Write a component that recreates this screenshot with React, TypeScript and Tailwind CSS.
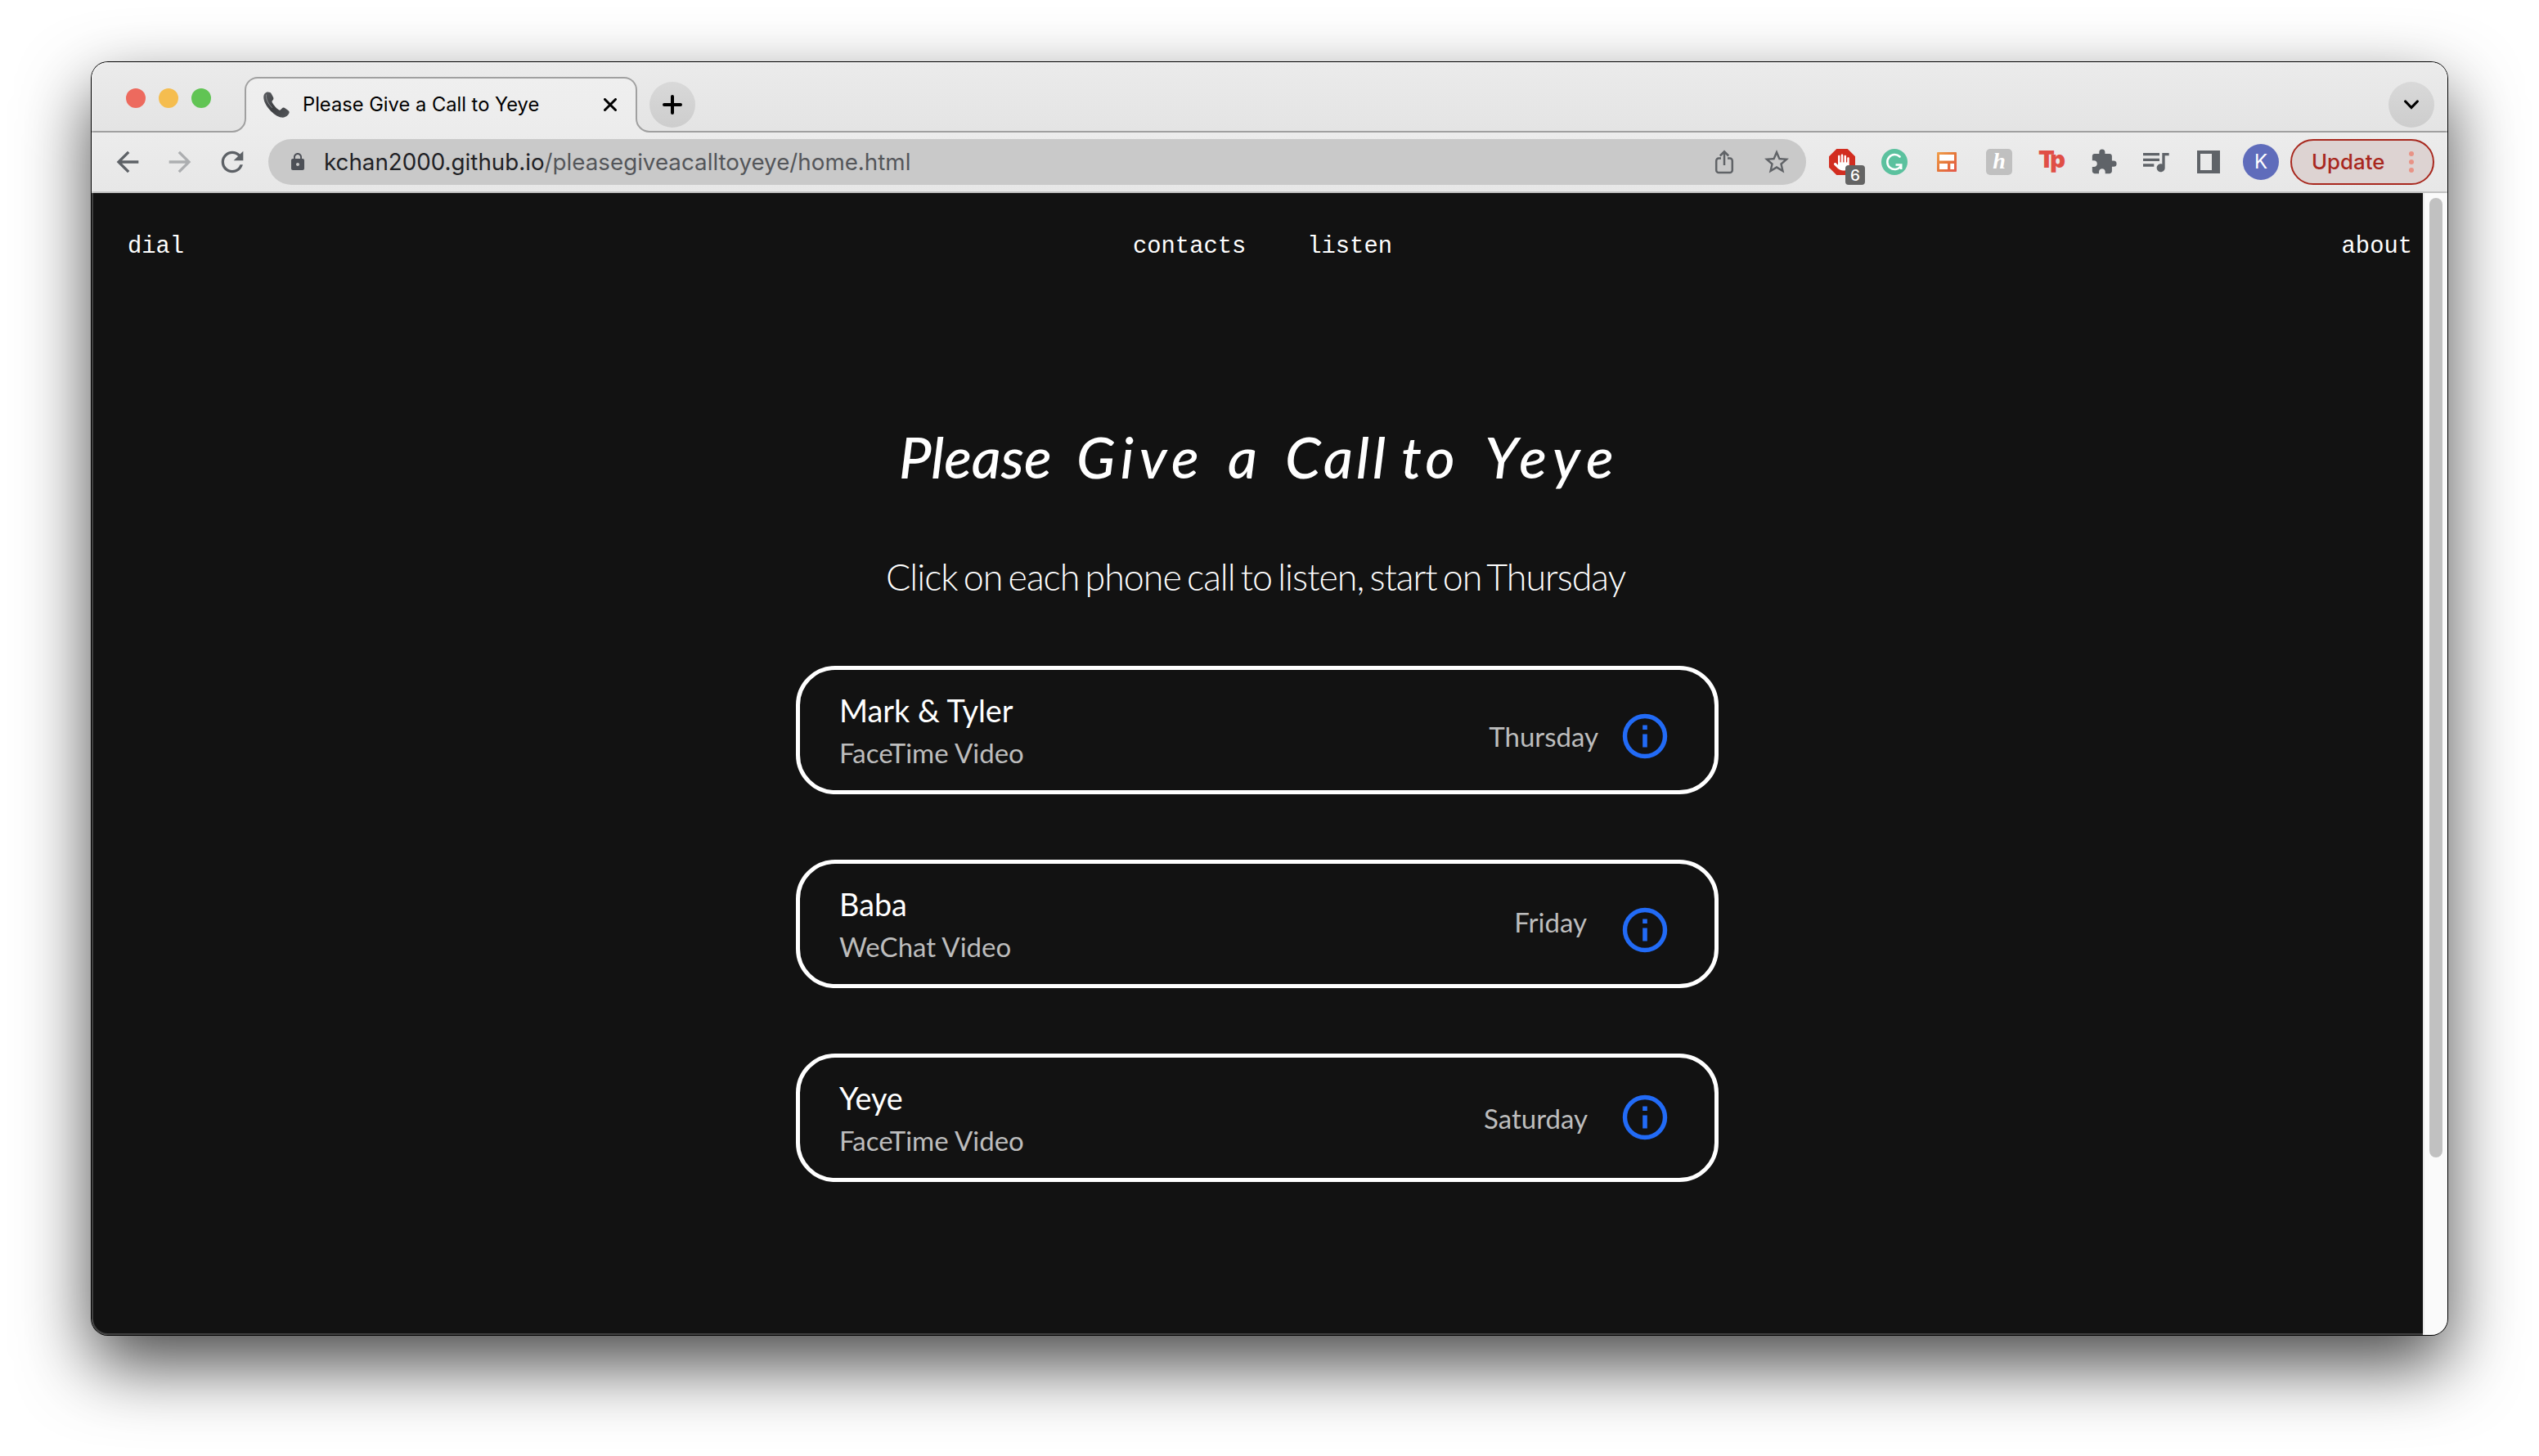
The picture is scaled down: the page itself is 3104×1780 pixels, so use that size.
import {
  MdArrowBack,
  MdArrowForward,
  MdExtension,
  MdLock,
  MdQueueMusic,
  MdRefresh,
  MdStarBorder,
} from "react-icons/md";
import { FaHand } from "react-icons/fa6";

const calls = [
  {
    name: "Mark & Tyler",
    kind: "FaceTime Video",
    day: "Thursday",
    dayClass: "mt-[61px] mr-[25px]",
    iconClass: "mt-[49px]",
  },
  {
    name: "Baba",
    kind: "WeChat Video",
    day: "Friday",
    dayClass: "mt-[51px] mr-[39px]",
    iconClass: "mt-[49px]",
  },
  {
    name: "Yeye",
    kind: "FaceTime Video",
    day: "Saturday",
    dayClass: "mt-[54px] mr-[38px]",
    iconClass: "mt-[41px]",
  },
];

function PhoneIcon() {
  return (
    <svg viewBox="0 0 32 32" className="h-8 w-8">
      <defs>
        <linearGradient id="handset" x1="0" y1="0" x2="1" y2="1">
          <stop offset="0" stopColor="#5b5d61" />
          <stop offset="0.5" stopColor="#3d3f42" />
          <stop offset="1" stopColor="#55575b" />
        </linearGradient>
      </defs>
      <path
        d="M5.6.5C3 .3.6 2.6.3 6c-.3 4.5 2.2 10.5 7.2 16 4.6 5.2 10 9 14.5 9.6 3 .4 6-.6 8.5-3.6 1.6-2 1.6-3.6-.2-5l-3.8-2.8c-1.5-1-2.8-.8-4 .5l-1.3 1.4c-.8.8-1.7.8-2.8 0-3.2-2.3-5.8-5.400-7.600-8.800-.5-1-.4-1.800.4-2.500 1.300-1.100 1.400-2.200.9-3.800L9.700 2.600C9 1 7.500.6 5.600.5Z"
        fill="url(#handset)"
      />
      <path d="M3.500 4c-.8 5 2.500 11 7 15.500" fill="none" stroke="#8a8c90" strokeWidth="1" strokeLinecap="round" />
    </svg>
  );
}

function TabFlare({ flip = false }: { flip?: boolean }) {
  return (
    <svg
      viewBox="0 0 18 18"
      className={
        flip
          ? "absolute -right-[18px] bottom-0 h-[18px] w-[18px] -scale-x-100"
          : "absolute bottom-0 -left-[18px] h-[18px] w-[18px]"
      }
    >
      <path d="M0 17H1A16 16 0 0 0 17 1V0H18V18H0Z" fill="#ececec" />
      <path d="M0 17H1A16 16 0 0 0 17 1V0" fill="none" stroke="#a0a0a0" strokeWidth="2" />
    </svg>
  );
}

function TabStrip() {
  return (
    <div className="flex h-[86px] items-end border-b-2 border-[#a0a0a0] bg-linear-to-b from-[#ebebeb] to-[#e4e4e4]">
      <div className="mb-[28px] ml-[42px] flex gap-4">
        <span className="h-6 w-6 rounded-full bg-[#ed6a5e]" />
        <span className="h-6 w-6 rounded-full bg-[#f5bd4f]" />
        <span className="h-6 w-6 rounded-full bg-[#61c454]" />
      </div>
      <div className="relative -mb-[2px] ml-[41px] flex h-[68px] w-[480px] items-center rounded-t-[16px] border-2 border-b-0 border-[#a0a0a0] bg-linear-to-b from-[#efefef] to-[#ececec] pr-[23px] pb-[2px] pl-[21px]">
        <TabFlare />
        <TabFlare flip />
        <PhoneIcon />
        <span className="ml-[16px] flex-1 pb-px text-[23.7px] leading-7 whitespace-nowrap text-black">
          Please Give a Call to Yeye
        </span>
        <svg viewBox="0 0 16 16" className="h-4 w-4">
          <path d="M1.500 1.500l13 13M14.500 1.500l-13 13" stroke="#000" strokeWidth="3" strokeLinecap="round" />
        </svg>
      </div>
      <div className="mb-1 ml-[15px] flex h-14 w-14 items-center justify-center rounded-full bg-linear-to-b from-[#d9d9d9] to-[#cdcdcd]">
        <svg viewBox="0 0 24 24" className="h-6 w-6">
          <path d="M12 2v20M2 12h20" stroke="#000" strokeWidth="4" strokeLinecap="round" />
        </svg>
      </div>
      <div className="mr-4 mb-1 ml-auto flex h-14 w-14 items-center justify-center rounded-full bg-linear-to-b from-[#d9d9d9] to-[#cdcdcd]">
        <svg viewBox="0 0 18 12" className="h-3 w-[18px]">
          <path d="M1.700 2l7.300 7.500L16.300 2" fill="none" stroke="#000" strokeWidth="3.200" strokeLinecap="round" />
        </svg>
      </div>
    </div>
  );
}

function ShareIcon() {
  return (
    <svg viewBox="0 0 24 30" className="h-[30px] w-6" fill="none" stroke="#606367" strokeWidth="2.5">
      <path d="M8 10.500H5.200A3 3 0 0 0 2.200 13.500v11.500a3 3 0 0 0 3 3h13.600a3 3 0 0 0 3-3V13.500a3 3 0 0 0-3-3H16" />
      <path d="M12 19V2.500M6.800 7.500L12 2.300l5.200 5.200" />
    </svg>
  );
}

function GrammarlyIcon() {
  return (
    <svg viewBox="0 0 32 32" className="h-8 w-8">
      <circle cx="16" cy="16" r="16" fill="#5bc19e" />
      <path d="M22.500 9.500A9 9 0 1 0 23.500 21.500" fill="none" stroke="#fff" strokeWidth="2.600" strokeLinecap="round" />
      <path d="M17.500 19.500h6.700v5.500" fill="none" stroke="#fff" strokeWidth="2.600" />
    </svg>
  );
}

function LayoutIcon() {
  return (
    <svg viewBox="0 0 24 24" className="h-6 w-6">
      <defs>
        <linearGradient id="frame" x1="0" y1="0" x2="1" y2="1">
          <stop offset="0" stopColor="#f0a04b" />
          <stop offset="0.5" stopColor="#e5773a" />
          <stop offset="1" stopColor="#e4584c" />
        </linearGradient>
      </defs>
      <rect width="24" height="24" rx="1" fill="url(#frame)" />
      <path d="M3 3h18v7.500H3zM3 14h10v7H3zM16.300 14H21v7h-4.700z" fill="#fff" />
    </svg>
  );
}

function Toolbar() {
  return (
    <div className="flex h-[74px] items-center border-b-2 border-[#c2c2c2] bg-linear-to-b from-[#ececec] to-[#e7e7e7] pr-4">
      <MdArrowBack className="ml-[24px] h-10 w-10 text-[#5d6166]" />
      <MdArrowForward className="ml-[24px] h-10 w-10 text-[#acaeb0]" />
      <MdRefresh className="ml-[24px] h-10 w-10 text-[#5d6166]" />
      <div className="ml-[24px] flex h-14 w-[1880px] items-center rounded-full bg-[#c9c9c9] pr-[18px] pl-[24px]">
        <MdLock className="h-6 w-6 text-[#4d5057]" />
        <span className="ml-[20px] text-[27.75px] leading-8 whitespace-nowrap text-[#54565a]">
          <span className="text-[#1f2125]">kchan2000.github.io</span>/pleasegiveacalltoyeye/home.html
        </span>
        <div className="ml-auto flex items-center gap-[34px]">
          <ShareIcon />
          <MdStarBorder className="h-9 w-9 text-[#606367]" />
        </div>
      </div>
      <div className="relative ml-[28px] h-8 w-8">
        <div className="flex h-8 w-8 items-center justify-center bg-[#d22d20] [clip-path:polygon(29%_0,71%_0,100%_29%,100%_71%,71%_100%,29%_100%,0_71%,0_29%)]">
          <FaHand className="h-[23px] w-[20px] text-white" />
        </div>
        <span className="absolute top-5 left-5 flex h-6 w-6 items-center justify-center rounded-[4px] bg-[#646464] pt-[2px] text-[19px] font-medium text-white">
          6
        </span>
      </div>
      <div className="ml-8">
        <GrammarlyIcon />
      </div>
      <div className="ml-9">
        <LayoutIcon />
      </div>
      <div className="ml-9 flex h-8 w-8 items-center justify-center rounded-[5px] bg-[#c0c0c0] pb-[3px] font-['Liberation_Serif',serif] text-[28px] leading-none font-bold text-white italic">
        h
      </div>
      <span className="-mt-[6px] ml-[32px] font-['Inter',sans-serif] text-[29px] leading-8 font-black tracking-[-4px] text-[#e04f46]">
        Tp
      </span>
      <div className="ml-auto flex items-center">
        <MdExtension className="h-[34px] w-[34px] text-[#5f6368]" />
        <MdQueueMusic className="-mt-[3px] ml-[26px] h-10 w-10 text-[#5f6368]" />
        <span className="ml-[31px] h-7 w-7 border-4 border-r-[10px] border-[#5f6368]" />
        <span className="ml-7 flex h-11 w-11 items-center justify-center rounded-full bg-[#5f6cbb] text-[24px] text-white">
          K
        </span>
        <div className="ml-[14px] flex h-14 w-44 items-center rounded-full border-2 border-[#a8281e] bg-[#ddd3d2] pl-[24px]">
          <span className="text-[25.8px] leading-8 font-medium text-[#a8281e]">Update</span>
          <div className="mr-[23px] ml-auto flex flex-col gap-1">
            <span className="h-1.5 w-1.5 rounded-full bg-[#e89386]" />
            <span className="h-1.5 w-1.5 rounded-full bg-[#e89386]" />
            <span className="h-1.5 w-1.5 rounded-full bg-[#e89386]" />
          </div>
        </div>
      </div>
    </div>
  );
}

function InfoIcon({ className }: { className: string }) {
  return (
    <svg viewBox="0 0 64 64" className={`h-16 w-16 ${className}`}>
      <circle cx="32" cy="32" r="24.5" fill="none" stroke="#226bf6" strokeWidth="5.4" />
      <path d="M29.200 18.500h5.600v5.500h-5.600zM29.200 29.500h5.600v16h-5.600z" fill="#226bf6" />
    </svg>
  );
}

function Page() {
  return (
    <div className="flex h-[1396px] bg-[#121212]">
      <main className="flex w-[2850px] flex-col font-['Lato',sans-serif] text-white">
        <nav className="grid h-32 grid-cols-[1fr_auto_1fr] items-center pt-[3px] pr-[13px] pl-[44px] font-['Liberation_Mono',monospace] text-[28.8px]">
          <span>dial</span>
          <div className="mr-[18px] flex gap-[75px]">
            <span>contacts</span>
            <span>listen</span>
          </div>
          <span className="text-right">about</span>
        </nav>
        <h1 className="mt-[154px] ml-[987px] flex h-20 text-[70px] leading-[80px] font-medium whitespace-pre italic">
          <span className="w-[217px]">Please </span>
          <span className="w-[185px] tracking-[6.5px]">Give </span>
          <span className="w-[70px]">a </span>
          <span className="w-[142px] tracking-[4px]">Call </span>
          <span className="w-[102px] tracking-[5px]">to </span>
          <span className="tracking-[8px]">Yeye</span>
        </h1>
        <p className="mt-[79px] ml-[971px] text-[44.8px] leading-[56px] font-light tracking-[-1px] whitespace-nowrap [word-spacing:-4px]">
          Click on each phone call to listen, start on Thursday
        </p>
        <div className="mt-[81px] ml-[861px] flex w-[1128px] flex-col gap-20">
          {calls.map((call) => (
            <div key={call.name} className="flex h-[157px] rounded-[48px] border-[5px] border-white pr-[53px] pl-[48px]">
              <div className="flex flex-col pt-[25px]">
                <span className="text-[37.8px] leading-[50px]">{call.name}</span>
                <span className="text-[33px] leading-[52px] text-[#bdbdbd]">{call.kind}</span>
              </div>
              <div className="ml-auto flex items-start">
                <span className={`text-[33px] leading-10 text-[#bdbdbd] ${call.dayClass}`}>{call.day}</span>
                <InfoIcon className={call.iconClass} />
              </div>
            </div>
          ))}
        </div>
      </main>
      <div className="w-[30px] border-l-2 border-[#e9e9e9] bg-[#fafafa] pt-[6px] pl-[6px]">
        <div className="h-[1173px] w-4 rounded-full bg-[#c1c1c1]" />
      </div>
    </div>
  );
}

export default function App() {
  return (
    <div className="h-[1780px] w-[3104px] overflow-hidden bg-white pt-[76px] pl-[112px] font-['Inter',sans-serif]">
      <div className="relative h-[1556px] w-[2880px] overflow-hidden rounded-[20px] shadow-[0_0_0_1px_#000,0_36px_86px_rgba(0,0,0,0.72)]">
        <TabStrip />
        <Toolbar />
        <Page />
        <div className="pointer-events-none absolute inset-0 rounded-[20px] border-2 border-white/20" />
      </div>
    </div>
  );
}
